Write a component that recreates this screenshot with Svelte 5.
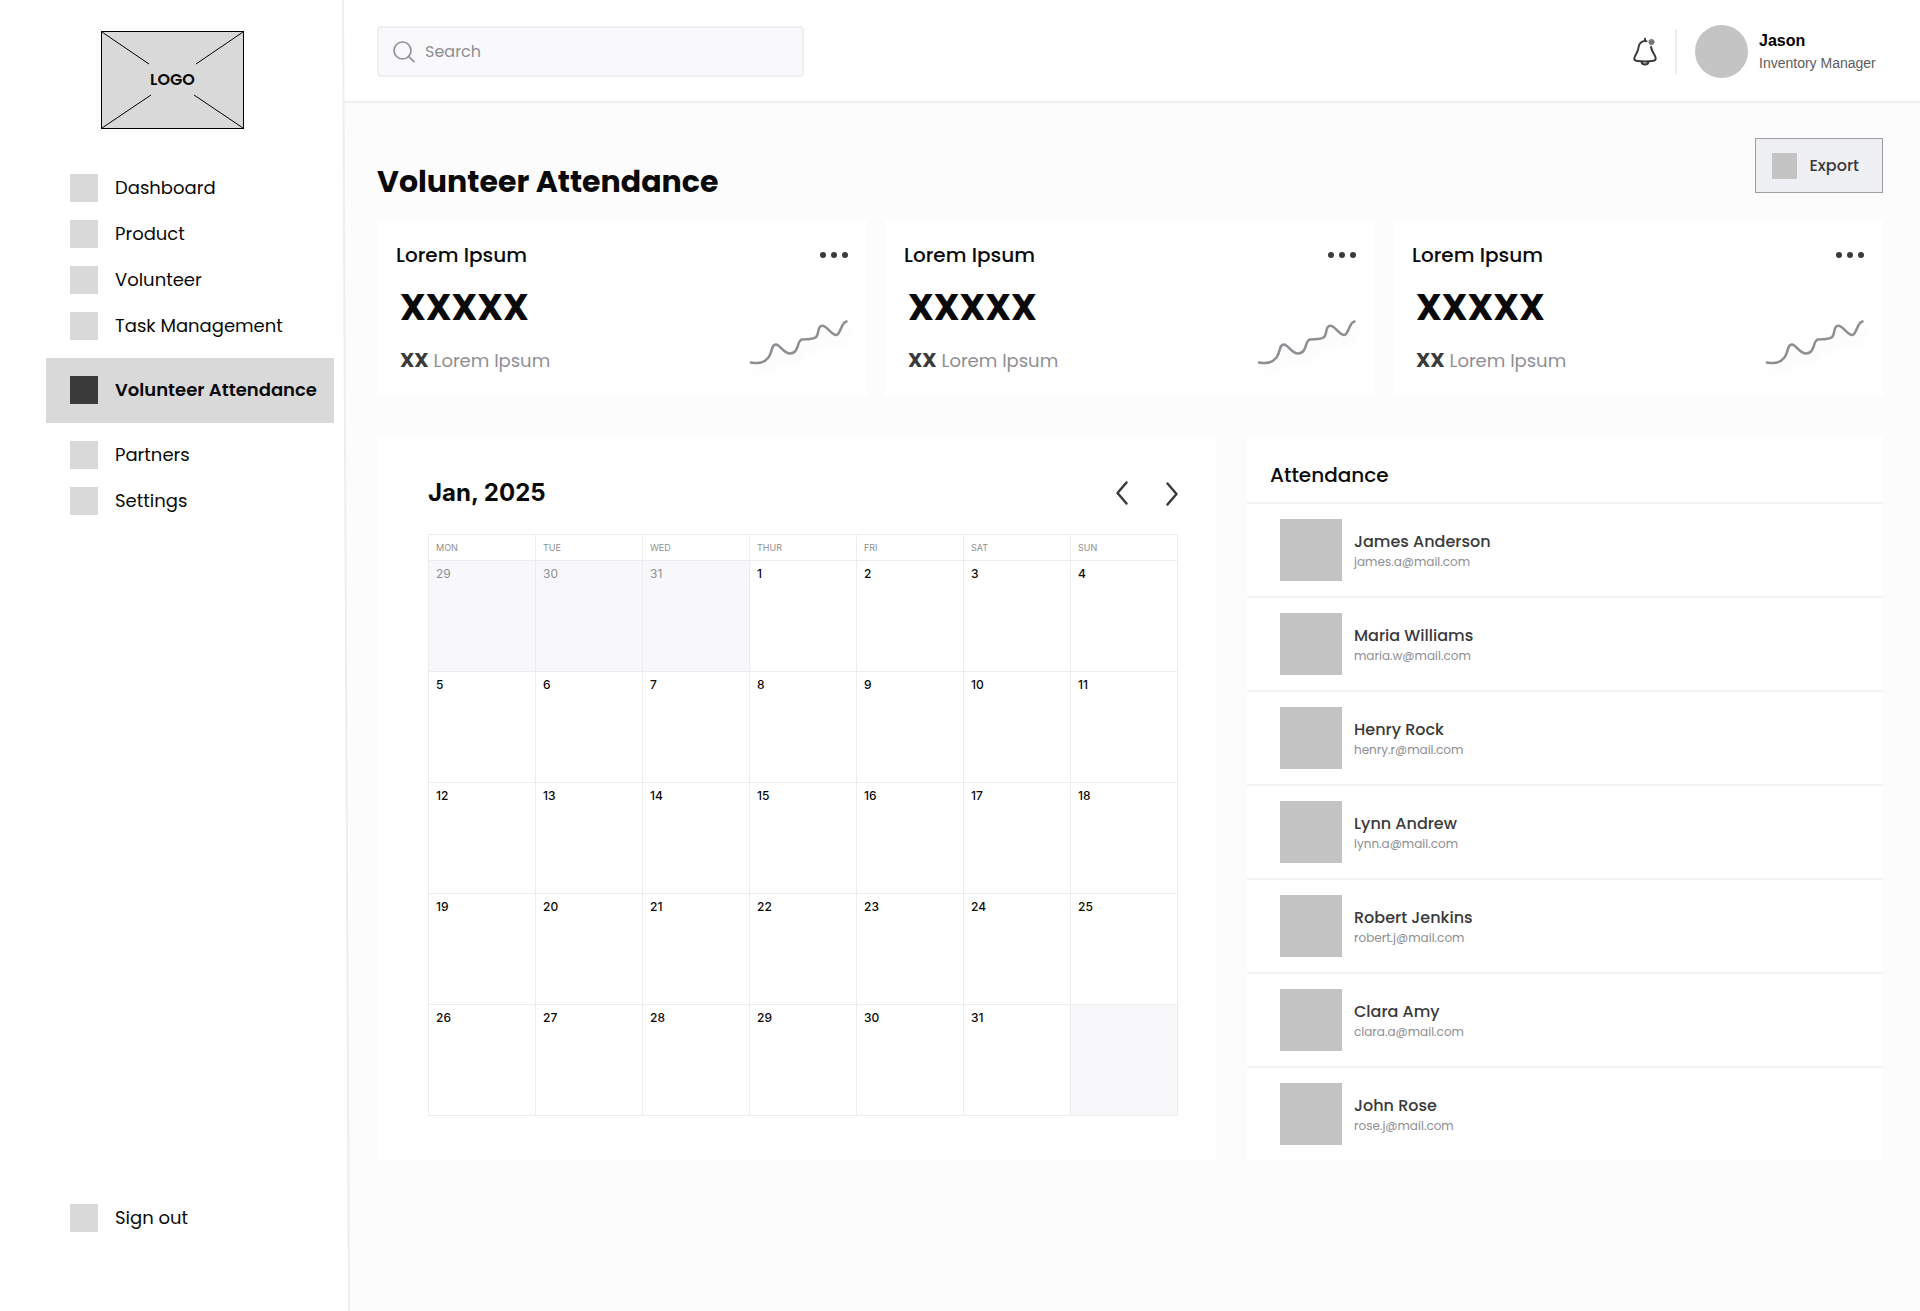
<script>
  const links = ['Dashboard', 'Product', 'Volunteer', 'Task Management', 'Volunteer Attendance', 'Partners', 'Settings'];
  const active = 'Volunteer Attendance';
  const cards = [1, 2, 3];
  const days = ['MON', 'TUE', 'WED', 'THUR', 'FRI', 'SAT', 'SUN'];
  const weeks = [
    [29, 30, 31, 1, 2, 3, 4],
    [5, 6, 7, 8, 9, 10, 11],
    [12, 13, 14, 15, 16, 17, 18],
    [19, 20, 21, 22, 23, 24, 25],
    [26, 27, 28, 29, 30, 31, null]
  ];
  const people = [
    ['James Anderson', 'james.a@mail.com'],
    ['Maria Williams', 'maria.w@mail.com'],
    ['Henry Rock', 'henry.r@mail.com'],
    ['Lynn Andrew', 'lynn.a@mail.com'],
    ['Robert Jenkins', 'robert.j@mail.com'],
    ['Clara Amy', 'clara.a@mail.com'],
    ['John Rose', 'rose.j@mail.com']
  ];
  const outside = (w, d) => (w === 0 && d < 3) || (w === 4 && d === 6);
</script>

<div class="app">
  <aside class="sidebar">
    <div class="logo">
      <svg viewBox="0 0 143 98" aria-hidden="true">
        <rect x="0.5" y="0.5" width="142" height="97" fill="#d9d9d9" stroke="#000" />
        <path d="M1 1 48 33M142 1 95 33M1 97 50 64M142 97 93 64" fill="none" stroke="#000" />
      </svg>
      <span>LOGO</span>
    </div>
    <nav class="nav">
      {#each links as link}
        <a href="#{link}" class:active={link === active}><i></i>{link}</a>
      {/each}
      <a href="#signout" class="signout"><i></i>Sign out</a>
    </nav>
    <svg class="edge" viewBox="0 0 8 1311" preserveAspectRatio="none" aria-hidden="true">
      <path d="M0 0H1L7 1311H0Z" fill="#fff" />
      <path d="M0 0H2L8 1311H6Z" fill="#ededf2" />
    </svg>
  </aside>

  <div class="page">
    <header class="topbar">
      <label class="search">
        <svg viewBox="0 0 22 22" width="22" height="22" fill="none" stroke="#8e8e93" stroke-width="1.6" stroke-linecap="round" aria-hidden="true">
          <circle cx="9.5" cy="9.5" r="8.5" />
          <path d="m15.7 15.7 5.3 5" />
        </svg>
        <input type="search" placeholder="Search" aria-label="Search" />
      </label>
      <div class="account">
        <button class="bell" aria-label="Notifications">
          <svg viewBox="0 0 24 30" width="24" height="30" fill="none" stroke="#3a3a3a" stroke-width="2" stroke-linecap="round" stroke-linejoin="round">
            <path d="M13.500 4.200C9 3.300 5.800 6.300 5.500 10.500 5.200 16 1.300 18 1.300 21.500c0 1.500 1 2.300 2.900 2.500 5 .6 10.800.6 15.300 0 2-.2 3.200-1 3.200-2.500 0-3.300-3.600-5.500-4.700-11.500M12 1.800V4M8.500 25c.7 3.200 6.300 3.200 7 0" />
            <circle cx="18.500" cy="5" r="2.600" fill="#77777b" stroke="#77777b" stroke-width="1" />
          </svg>
        </button>
        <div class="rule"></div>
        <div class="face"></div>
        <div class="who">
          <strong>Jason</strong>
          <span>Inventory Manager</span>
        </div>
      </div>
    </header>

    <main class="content">
      <div class="heading">
        <h1>Volunteer Attendance</h1>
        <button class="export"><i></i>Export</button>
      </div>

      <section class="cards">
        {#each cards as card (card)}
          <article class="card">
            <div class="card-head">
              <h2>Lorem Ipsum</h2>
              <button class="more" aria-label="More options"><i></i><i></i><i></i></button>
            </div>
            <div class="card-body">
              <div>
                <p class="figure">XXXXX</p>
                <p class="note"><b>XX</b> <span>Lorem Ipsum</span></p>
              </div>
              <svg class="trend" viewBox="0 0 99 52" width="99" height="52" aria-hidden="true">
                <path d="M2 43.500C10 44.800 15 44 19.500 38.500 23.500 33.500 22 25.500 27 25.500 31 25.800 35 34.500 41 34.500 50.500 34.500 47.500 21.300 53 20.500 58 19.800 63 20.800 66.500 18.500 70.500 16 68 7 73 6.800 78 6.600 82.500 16 87 16 91.500 16 92 3.500 97.500 2.500" />
              </svg>
            </div>
          </article>
        {/each}
      </section>

      <div class="panels">
        <section class="calendar">
          <div class="cal-head">
            <h2>Jan, 2025</h2>
            <div class="arrows">
              <button aria-label="Previous month">
                <svg viewBox="0 0 12 24" width="12" height="24"><path d="M10.500 1.500 1.500 12l9 10.500" /></svg>
              </button>
              <button aria-label="Next month">
                <svg viewBox="0 0 12 24" width="12" height="24"><path d="m1.500 2.500 9 10.500-9 10.500" /></svg>
              </button>
            </div>
          </div>
          <table>
            <thead>
              <tr>{#each days as day}<th scope="col">{day}</th>{/each}</tr>
            </thead>
            <tbody>
              {#each weeks as week, w}
                <tr>
                  {#each week as date, d}
                    <td class:outside={outside(w, d)}>{date ?? ''}</td>
                  {/each}
                </tr>
              {/each}
            </tbody>
          </table>
        </section>

        <section class="attendance">
          <h2>Attendance</h2>
          <ul>
            {#each people as [name, mail]}
              <li>
                <i></i>
                <div>
                  <strong>{name}</strong>
                  <span>{mail}</span>
                </div>
              </li>
            {/each}
          </ul>
        </section>
      </div>
    </main>
  </div>
</div>

<style>
  :global(body) {
    margin: 0;
    background: #fcfcfc;
  }
  .app {
    display: flex;
    min-height: 100vh;
    font-family: Poppins, Inter, sans-serif;
    color: #0a0a0a;
  }
  .app :global(*) {
    box-sizing: border-box;
  }
  h1, h2, p, ul {
    margin: 0;
    padding: 0;
  }
  button {
    font: inherit;
    color: inherit;
    padding: 0;
    border: 0;
    background: none;
  }
  .sidebar {
    position: relative;
    flex: none;
    display: flex;
    flex-direction: column;
    width: 344px;
    padding: 31px 10px 79px 46px;
    background: #fff;
  }
  .edge {
    position: absolute;
    top: 0;
    left: 342px;
    width: 8px;
    height: 100%;
  }
  .logo {
    display: grid;
    place-items: center;
    width: 143px;
    margin-left: 55px;
    font-size: 16px;
    line-height: 24px;
    font-weight: 600;
  }
  .logo > * {
    grid-area: 1 / 1;
  }
  .logo svg {
    display: block;
    width: 100%;
  }
  .nav {
    flex: 1;
    display: flex;
    flex-direction: column;
    gap: 18px;
    margin-top: 45px;
  }
  .nav a {
    display: flex;
    align-items: center;
    gap: 17px;
    padding-left: 24px;
    font-size: 18px;
    line-height: 28px;
    white-space: nowrap;
    color: inherit;
    text-decoration: none;
  }
  .nav i {
    width: 28px;
    height: 28px;
    background: #d9d9d9;
  }
  .nav .active {
    padding-block: 18px 19px;
    background: #d9d9d9;
    font-weight: 600;
  }
  .nav .active i {
    background: #3a3a3a;
  }
  .nav .signout {
    margin-top: auto;
  }
  .page {
    flex: 1;
    min-width: 0;
  }
  .topbar {
    display: flex;
    align-items: center;
    justify-content: space-between;
    height: 103px;
    padding: 2px 37px 0 33px;
    background: #fff;
    border-bottom: 2px solid #ededf2;
  }
  .search {
    display: flex;
    align-items: center;
    gap: 10px;
    width: 427px;
    height: 51px;
    padding: 0 14px;
    border: 2px solid #efeff3;
    border-radius: 4px;
    background: #f9f9fb;
  }
  .search input {
    flex: 1;
    min-width: 0;
    padding: 0;
    border: 0;
    outline: 0;
    background: none;
    font: 400 16px/24px Poppins, Inter, sans-serif;
    color: inherit;
  }
  .search input::placeholder {
    color: #8e8e93;
    opacity: 1;
  }
  .account {
    display: flex;
    align-items: center;
  }
  .bell svg {
    display: block;
  }
  .rule {
    width: 2px;
    height: 45px;
    margin: 0 18px;
    background: #ededf2;
  }
  .face {
    width: 53px;
    height: 53px;
    border-radius: 50%;
    background: #c4c4c4;
  }
  .who {
    display: flex;
    flex-direction: column;
    min-width: 124px;
    margin-left: 11px;
    font-family: "Liberation Sans", Arial, sans-serif;
    line-height: 23px;
  }
  .who strong {
    font-size: 16px;
    color: #000;
  }
  .who span {
    font-size: 14px;
    color: #5c5c60;
  }
  .content {
    padding: 35px 37px 40px 33px;
  }
  .heading {
    display: flex;
    align-items: flex-start;
    justify-content: space-between;
    margin-bottom: 26px;
  }
  h1 {
    margin-top: 21px;
    font-size: 30px;
    line-height: 46px;
    height: 34px;
    font-weight: 700;
  }
  .export {
    display: flex;
    align-items: center;
    gap: 12px;
    height: 55px;
    padding: 0 23px 0 16px;
    border: 1px solid #9d9da3;
    background: #eff0f4;
    font-size: 16px;
    font-weight: 500;
    color: #3a3a3a;
  }
  .export i {
    width: 25px;
    height: 26px;
    background: #c4c4c4;
  }
  .cards {
    display: grid;
    grid-template-columns: repeat(3, 1fr);
    gap: 18px;
  }
  .card {
    height: 177px;
    padding: 21px 19px 0;
    background: #fff;
  }
  .card-head {
    display: flex;
    align-items: center;
    justify-content: space-between;
  }
  .card h2 {
    font-size: 20px;
    line-height: 30px;
    font-weight: 500;
  }
  .more {
    display: flex;
    gap: 5px;
  }
  .more i {
    width: 6px;
    height: 6px;
    border-radius: 50%;
    background: #3a3a3a;
  }
  .card-body {
    display: flex;
    align-items: flex-end;
    justify-content: space-between;
    padding-left: 4px;
  }
  .figure {
    margin-top: 14px;
    font-size: 36px;
    line-height: 48px;
    font-weight: 700;
  }
  .note {
    display: flex;
    align-items: baseline;
    gap: 5px;
    margin-top: 14px;
    font-size: 18px;
    line-height: 28px;
    color: #8e8e93;
  }
  .note b {
    font-size: 20px;
    font-weight: 700;
    color: #3a3a3a;
  }
  .trend {
    overflow: visible;
    margin-bottom: 4px;
    filter: drop-shadow(3px 8px 5px rgb(0 0 0 / 5%));
  }
  .trend path {
    fill: none;
    stroke: #8e8e93;
    stroke-width: 2.6;
    stroke-linecap: round;
  }
  .panels {
    display: grid;
    grid-template-columns: 839fr 636fr;
    gap: 31px;
    margin-top: 39px;
  }
  .calendar {
    padding: 40px 38px 42px 51px;
    background: #fff;
    font-family: Inter, sans-serif;
  }
  .cal-head {
    display: flex;
    align-items: center;
    justify-content: space-between;
    margin-bottom: 23px;
  }
  .cal-head h2 {
    font-size: 24px;
    line-height: 36px;
    font-weight: 700;
  }
  .arrows {
    display: flex;
    gap: 38px;
  }
  .arrows svg {
    display: block;
    overflow: visible;
    fill: none;
    stroke: #3a3a3a;
    stroke-width: 2.5;
    stroke-linecap: round;
    stroke-linejoin: round;
  }
  table {
    width: 100%;
    table-layout: fixed;
    border-collapse: collapse;
  }
  th, td {
    border: 1px solid #ededf0;
    text-align: left;
    vertical-align: top;
  }
  th {
    height: 26px;
    padding: 0 7px;
    vertical-align: middle;
    font-size: 9px;
    line-height: 12px;
    font-weight: 400;
    color: #8e8e93;
  }
  td {
    height: 111px;
    padding: 4px 7px;
    font-size: 12px;
    line-height: 18px;
    font-weight: 500;
  }
  td.outside {
    background: #f8f8fa;
    font-weight: 400;
    color: #8e8e93;
  }
  .attendance {
    background: #fff;
  }
  .attendance h2 {
    padding: 25px 23px 12px;
    font-size: 20px;
    line-height: 30px;
    font-weight: 500;
  }
  .attendance li {
    display: flex;
    align-items: center;
    gap: 12px;
    height: 94px;
    padding: 0 33px;
    border-top: 2px solid #f2f2f4;
  }
  .attendance i {
    width: 62px;
    height: 62px;
    background: #c4c4c4;
  }
  .attendance li div {
    display: flex;
    flex-direction: column;
    padding-top: 2px;
  }
  .attendance strong {
    font-size: 16px;
    line-height: 22px;
    font-weight: 500;
    color: #3a3a3a;
  }
  .attendance span {
    font-size: 12px;
    line-height: 18px;
    color: #8e8e93;
  }
</style>
